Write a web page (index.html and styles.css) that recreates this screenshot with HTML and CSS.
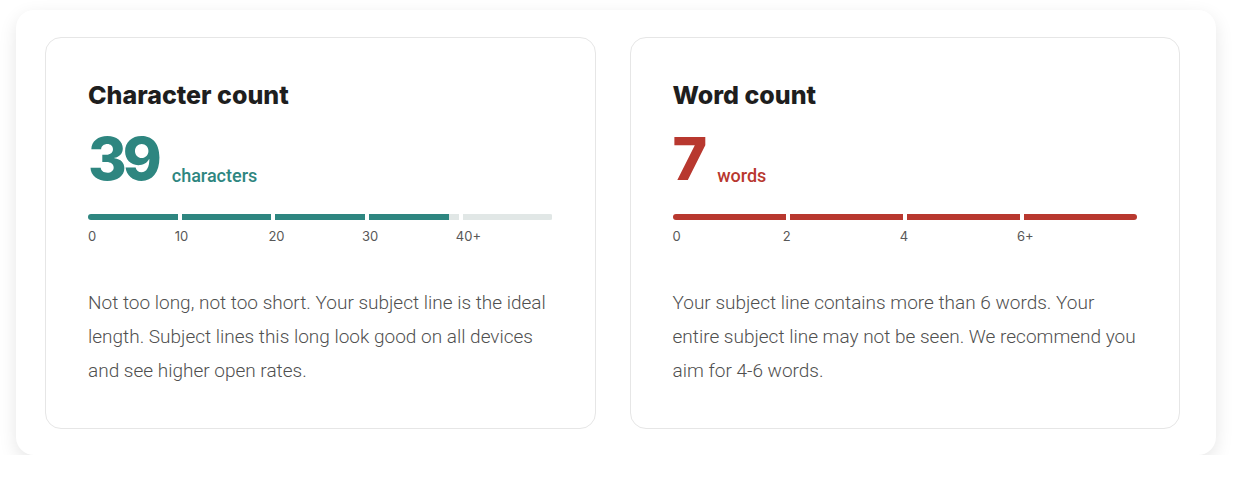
FILE: index.html
```html
<!DOCTYPE html>
<html lang="en">

<head>
  <meta charset="UTF-8">
  <meta name="viewport" content="width=device-width, initial-scale=1.0">
  <title>Subject Line Counts</title>
  <link rel="stylesheet" href="styles.css">
</head>

<body>

  <div class="panel">

    <div class="card">
      <h2>Character count</h2>
      <div class="count teal">
        <span class="num">39</span>
        <span class="unit">characters</span>
      </div>

      <div class="meter five">
        <div class="seg"><span class="fill teal-bg" style="width:100%"></span></div>
        <div class="seg"><span class="fill teal-bg" style="width:100%"></span></div>
        <div class="seg"><span class="fill teal-bg" style="width:100%"></span></div>
        <div class="seg"><span class="fill teal-bg" style="width:89%"></span></div>
        <div class="seg"></div>
      </div>
      <div class="ticks five">
        <span>0</span>
        <span>10</span>
        <span>20</span>
        <span>30</span>
        <span>40+</span>
      </div>

      <p class="note">Not too long, not too short. Your subject line is the ideal length. Subject lines this long look good on all devices and see higher open rates.</p>
    </div>

    <div class="card">
      <h2>Word count</h2>
      <div class="count red">
        <span class="num">7</span>
        <span class="unit">words</span>
      </div>

      <div class="meter four">
        <div class="seg"><span class="fill red-bg" style="width:100%"></span></div>
        <div class="seg"><span class="fill red-bg" style="width:100%"></span></div>
        <div class="seg"><span class="fill red-bg" style="width:100%"></span></div>
        <div class="seg"><span class="fill red-bg" style="width:100%"></span></div>
      </div>
      <div class="ticks four">
        <span>0</span>
        <span>2</span>
        <span>4</span>
        <span>6+</span>
      </div>

      <p class="note">Your subject line contains more than 6 words. Your entire subject line may not be seen. We recommend you aim for 4-6 words.</p>
    </div>

  </div>

</body>

</html>
```

FILE: styles.css
```css
body {
  margin: 0;
  padding: 0;
  background: #ffffff;
  font-family: Roboto, 'Liberation Sans', sans-serif;
}

.panel {
  width: 1200px;
  box-sizing: border-box;
  margin: 10px 0 0 16px;
  padding: 27px 36px 26px 29px;
  background: #ffffff;
  border-radius: 18px;
  box-shadow: 0 6px 18px rgba(0, 0, 0, 0.1);
  display: flex;
  gap: 34px;
}

.card {
  flex: 1;
  height: 392px;
  box-sizing: border-box;
  padding: 42px 42px 0 42px;
  border: 1px solid #e6e6e6;
  border-radius: 16px;
}

h2 {
  margin: 0;
  font-family: Inter, 'Open Sans', sans-serif;
  font-weight: 800;
  font-size: 25px;
  line-height: 31px;
  color: #1e1e1e;
}

.count {
  margin-top: 18px;
  height: 60px;
  line-height: 60px;
  white-space: nowrap;
}

.count .num {
  font-family: Inter, 'Open Sans', sans-serif;
  font-weight: 800;
  font-size: 59px;
  letter-spacing: -4px;
  margin-right: 10px;
}

.count .unit {
  font-size: 18px;
  font-weight: 500;
  vertical-align: -2px;
}

.teal {
  color: #2e8680;
}

.red {
  color: #b8382f;
}

.teal-bg {
  background: #2e8680;
}

.red-bg {
  background: #b8382f;
}

.meter {
  display: grid;
  gap: 4px;
  margin-top: 25px;
  height: 6px;
  border-radius: 3px;
  overflow: hidden;
}

.five {
  grid-template-columns: repeat(5, 1fr);
}

.four {
  grid-template-columns: repeat(4, 1fr);
}

.seg {
  background: #e1e7e6;
  display: flex;
}

.fill {
  display: block;
  height: 100%;
}

.ticks {
  display: grid;
  gap: 4px;
  margin-top: 8px;
  font-family: Inter, 'Open Sans', sans-serif;
  font-size: 13px;
  line-height: 16px;
  color: #585858;
}

.ticks span + span {
  transform: translateX(-7px);
}

.note {
  margin: 42px 0 0;
  font-size: 19px;
  font-weight: 300;
  line-height: 34px;
  color: #505050;
}
```
